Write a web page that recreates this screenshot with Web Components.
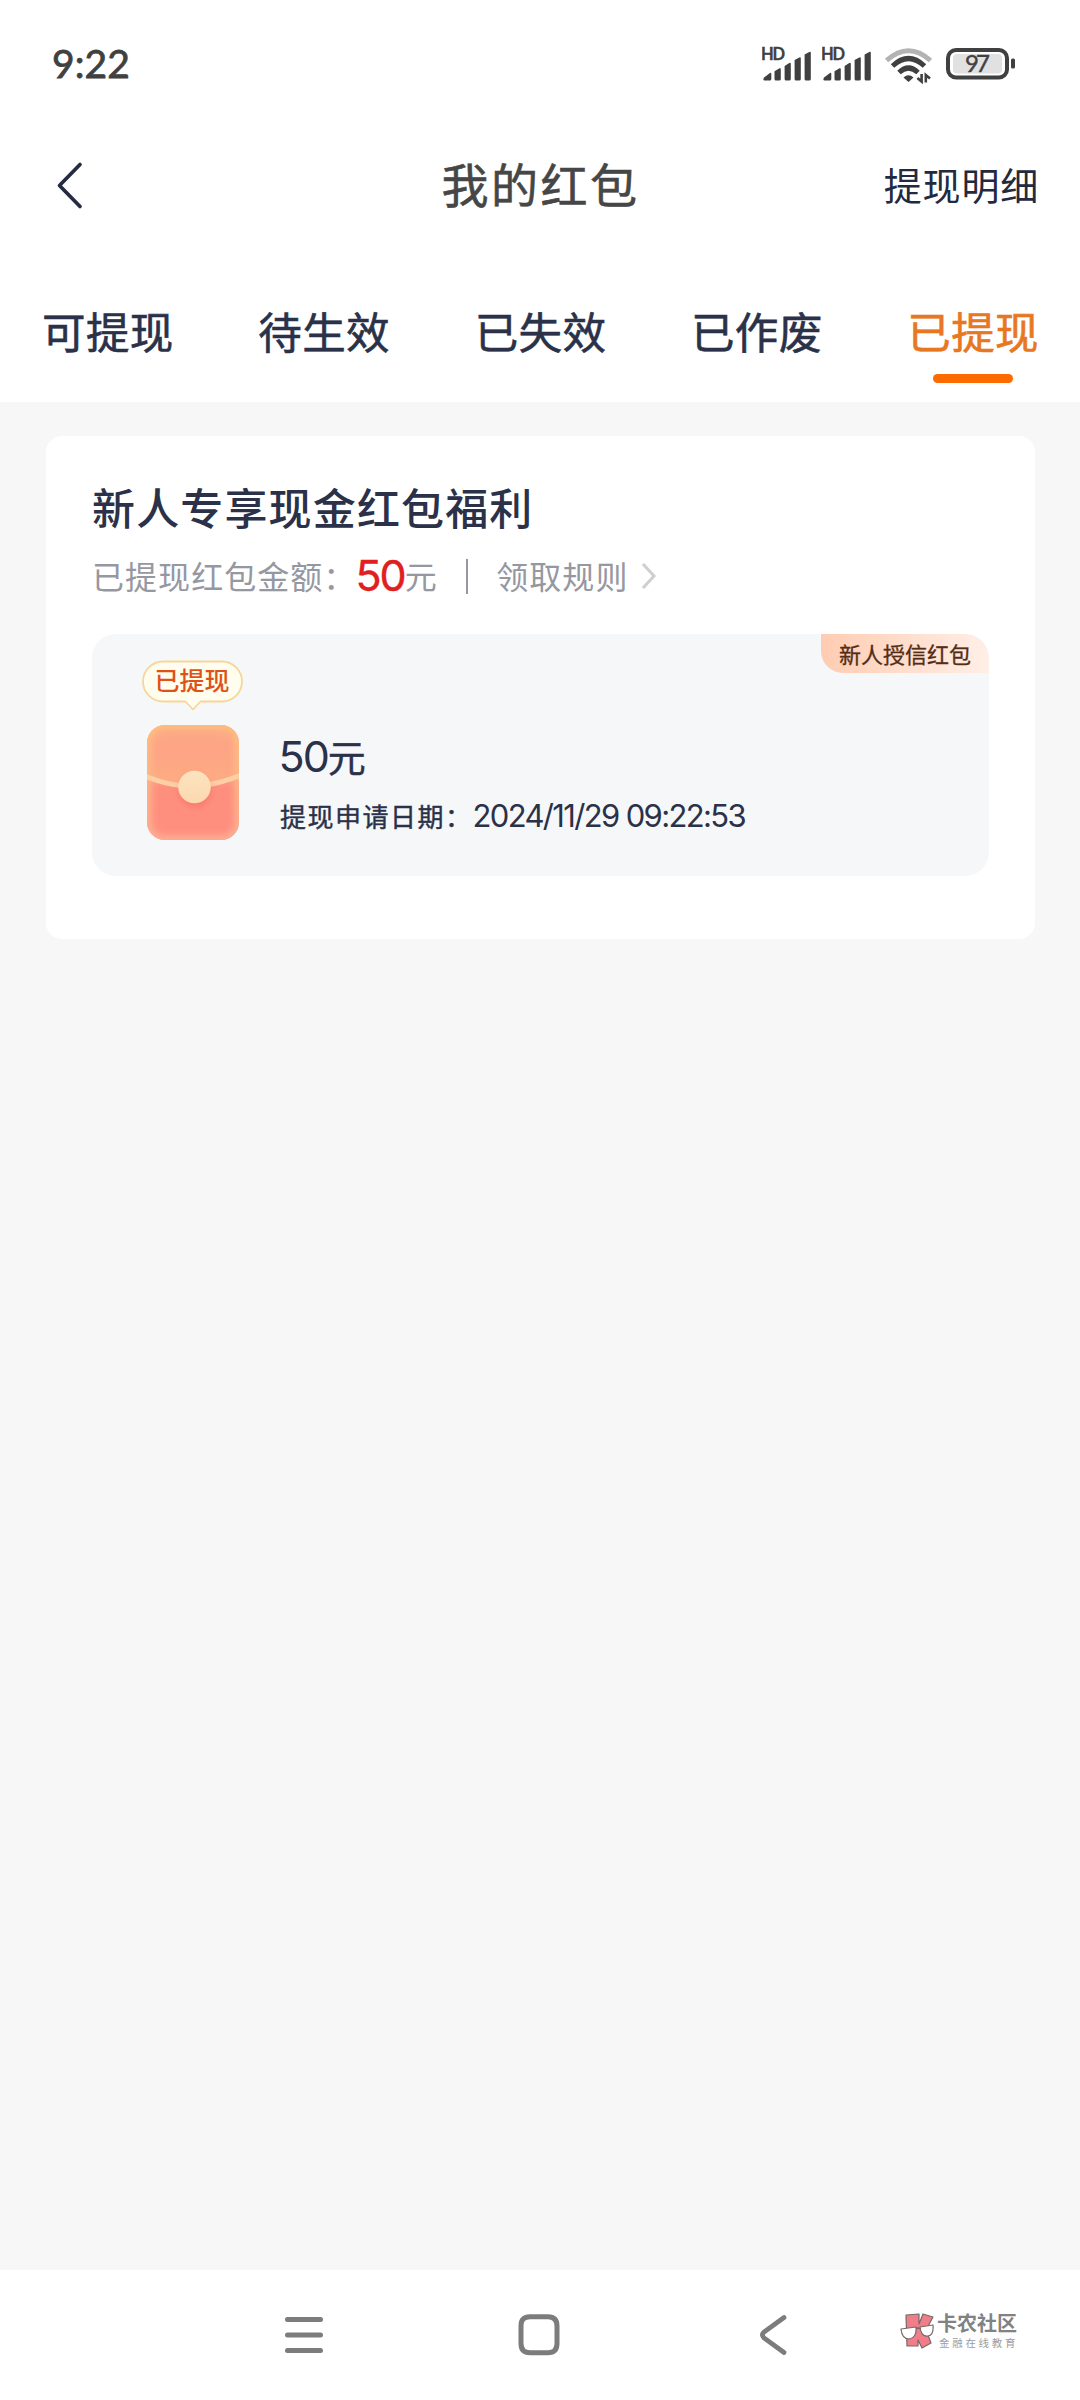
<!DOCTYPE html>
<html lang="zh-CN">
<head>
<meta charset="utf-8">
<title>我的红包</title>
<style>
html,body{margin:0;padding:0}
body{width:1080px;height:2400px;background:#f7f7f7;font-family:"Noto Sans CJK SC",sans-serif;color:#2a3148;overflow:hidden}
</style>
</head>
<body>
<packet-page></packet-page>
<script>
const define = (name, html) => {
  const t = document.createElement('template');
  t.innerHTML = html;
  customElements.define(name, class extends HTMLElement {
    constructor() {
      super();
      this.attachShadow({ mode: 'open' }).append(t.content.cloneNode(true));
    }
  });
};

define('signal-bars', `
<style>:host{display:block;width:60px;height:40px}svg{display:block}</style>
<svg width="60" height="40" viewBox="0 0 60 40" fill="#404040">
  <text x="-1" y="17" font-family="Lato,sans-serif" font-weight="700" font-size="16.5" textLength="24" stroke="#404040" stroke-width=".3">HD</text>
  <path d="M2 34.500l6-4.500q1.300-.6 1.300 1V36q0 1.500-1.500 1.500H2.500Q0.500 37 2 34.500ZM12.500 28.300l5-3q1.300-.6 1.300 1V36q0 1.500-1.500 1.500h-3.300q-1.500 0-1.500-1.500ZM22.600 23l4.700-3q1.500-.6 1.500 1v15q0 1.500-1.500 1.500h-3.200q-1.500 0-1.500-1.500ZM32.600 17l4.700-2.500q1.500-.6 1.500 1V36q0 1.500-1.500 1.500h-3.200q-1.500 0-1.500-1.500ZM42.600 11.500l4.700-2.500q1.500-.6 1.500 1v26q0 1.500-1.500 1.500h-3.200q-1.500 0-1.500-1.500Z"/>
</svg>`);

define('wifi-icon', `
<style>:host{display:block;width:50px;height:40px}svg{display:block}</style>
<svg width="50" height="40" viewBox="0 0 50 40" fill="none" stroke-width="5">
  <path d="M1.500 16.500Q23.500 -3 45.500 16.500" stroke="#b3b3b3"/>
  <path d="M7.500 22Q23.500 7 39.500 22M14 28.500Q23.500 19.500 33 28.500" stroke="#404040"/>
  <path d="M18.500 33.500Q23.500 29 28.500 33.500L23.500 38Z" fill="#404040"/>
  <path d="M36.600 30v7.500l-4.200-3.600M40.800 38.500v-7.500l4.200 3.400" stroke="#404040" stroke-width="2.600"/>
</svg>`);

define('battery-icon', `
<style>:host{display:block;width:70px;height:34px}svg{display:block}</style>
<svg width="70" height="34" viewBox="0 0 70 34">
  <rect x="2" y="2" width="59" height="27.500" rx="8" fill="#fff" stroke="#404040" stroke-width="4"/>
  <rect x="7" y="6" width="49" height="19.500" rx="4" fill="#e1e1e1"/>
  <rect x="65" y="10.500" width="4" height="10" rx="1.500" fill="#404040"/>
  <text x="19" y="24.300" font-family="Lato,sans-serif" font-size="24" fill="#404040" stroke="#404040" stroke-width=".4" textLength="25">97</text>
</svg>`);

define('status-bar', `
<style>
:host{display:flex;align-items:flex-start;justify-content:space-between;height:128px;padding:0 64px 0 52px;box-sizing:border-box;color:#404040}
time{font:400 39px/48px Lato,sans-serif;letter-spacing:.1px;padding-top:39px;-webkit-text-stroke:.8px #404040}
.icons{display:flex;align-items:flex-start;padding-top:43px}
wifi-icon{margin:1px 11px 0 3px}
battery-icon{margin-top:5px}
</style>
<time>9:22</time>
<div class="icons"><signal-bars></signal-bars><signal-bars></signal-bars><wifi-icon></wifi-icon><battery-icon></battery-icon></div>`);

define('title-bar', `
<style>
:host{display:grid;grid-template-columns:1fr auto 1fr;align-items:center;height:110px;padding:0 41px 6px 42px}
svg{display:block;margin:4px 0 0 14px}
h1{margin:0;font-size:47px;font-weight:400;letter-spacing:2.500px;color:#464646;line-height:70px;-webkit-text-stroke:.6px #464646}
.more{justify-self:end;font-size:38px;letter-spacing:.8px;line-height:56px;padding-top:2px;color:#232a40}
</style>
<svg width="28" height="50" viewBox="0 0 28 50" fill="none" stroke="#252c42" stroke-width="3.700" stroke-linecap="round" stroke-linejoin="round"><path d="M24 4.500L3.500 25.500L24 46.500"/></svg>
<h1><slot name="title"></slot></h1>
<span class="more"><slot name="action"></slot></span>`);

define('tab-item', `
<style>
:host{display:flex;flex-direction:column;align-items:center;font-size:43.500px;font-weight:400;line-height:64px;letter-spacing:.4px;-webkit-text-stroke:.6px currentColor}
i{display:none;width:80px;height:9px;border-radius:5px;background:#fd6a00;margin-top:11px}
:host([active]){color:#e87722}
:host([active]) i{display:block}
</style>
<slot></slot><i></i>`);

define('tab-bar', `
<style>:host{display:flex;justify-content:space-between;align-items:flex-start;height:158px;padding:55px 41px 0 42px;box-sizing:border-box}</style>
<slot></slot>`);

define('envelope-icon', `
<style>:host{display:block;width:92px;height:115px;margin-left:1px}svg{display:block}</style>
<svg width="92" height="115" viewBox="0 0 92 115">
  <defs>
    <linearGradient id="b" x1="0" y1="0" x2="0" y2="1"><stop offset="0" stop-color="#fda987"/><stop offset=".45" stop-color="#fda083"/><stop offset=".55" stop-color="#fe8f7e"/><stop offset="1" stop-color="#fe8f80"/></linearGradient>
    <linearGradient id="e" x1="0" y1="0" x2="0" y2="1"><stop offset="0" stop-color="#fdbf7e"/><stop offset="1" stop-color="#fdae94"/></linearGradient>
    <linearGradient id="c" x1="0" y1="0" x2="0" y2="1"><stop offset="0" stop-color="#fce3be"/><stop offset="1" stop-color="#fbd9b0"/></linearGradient>
    <linearGradient id="f" x1="0" y1="0" x2="0" y2="1"><stop offset=".4" stop-color="#fdb083" stop-opacity="0"/><stop offset="1" stop-color="#fdb585" stop-opacity=".7"/></linearGradient>
    <clipPath id="k"><rect width="92" height="115" rx="18"/></clipPath>
    <filter id="s" x="-20%" y="-20%" width="140%" height="140%"><feGaussianBlur stdDeviation="3"/></filter>
  </defs>
  <g clip-path="url(#k)">
    <rect width="92" height="115" fill="url(#b)"/>
    <path d="M0 0H92V49Q70 59 47 59Q20 59 0 50Z" fill="url(#f)"/>
    <rect width="92" height="115" rx="18" fill="none" stroke="url(#e)" stroke-width="9" filter="url(#s)"/>
    <path d="M-1 51.500Q18 59 33 60.500M62 59.500Q77 57 93 50.500" fill="none" stroke="#fccfa5" stroke-width="5"/>
    <circle cx="48" cy="66" r="16" fill="#f4665a" opacity=".5" filter="url(#s)"/>
    <circle cx="47.500" cy="62" r="16.300" fill="url(#c)"/>
  </g>
</svg>`);

define('speech-tag', `
<style>
:host{display:grid;width:102px;height:52px;margin-left:1px}
svg,span{grid-area:1/1}
span{font-size:25px;font-weight:500;line-height:38px;text-align:center;color:#df5217;z-index:1;padding-right:2px}
</style>
<svg width="102" height="52" viewBox="0 0 102 52"><path d="M21 1.500H80A20 20 0 0 1 80 41.500H58.500L51 49.500L43.500 41.500H21A20 20 0 0 1 21 1.500Z" fill="#fffdee" stroke="#f7d69b" stroke-width="1.800" stroke-linejoin="round"/></svg>
<span><slot></slot></span>`);

define('reward-item', `
<style>
:host{display:flex;position:relative;height:242px;background:#f5f7f9;border-radius:24px;overflow:hidden;box-sizing:border-box;padding-left:49px}
.left{display:flex;flex-direction:column;align-items:center;padding-top:26px;gap:13px}
.info{padding:95px 0 0 36px}
.amount{font:400 43px/54px Inter,"Noto Sans CJK SC",sans-serif;letter-spacing:-2px;display:flex;align-items:baseline;margin-left:-1.500px}
.amount b{font:400 38px/54px "Noto Sans CJK SC",sans-serif;letter-spacing:0;-webkit-text-stroke:.4px}
.date{display:flex;align-items:baseline;margin-top:13px;font-size:26px;line-height:40px;letter-spacing:1.500px;-webkit-text-stroke:.4px}
.date time{font:400 31px/40px Inter,sans-serif;letter-spacing:-1.650px;-webkit-text-stroke:0}
.ribbon{position:absolute;right:0;top:0;width:168px;height:39px;border-radius:0 24px 0 22px;background:linear-gradient(90deg,#ffccb2,#ffefe7);color:#542d15;font-size:22px;line-height:38px;text-align:center;-webkit-text-stroke:.3px}
</style>
<div class="left"><speech-tag><slot name="state"></slot></speech-tag><envelope-icon></envelope-icon></div>
<div class="info">
  <div class="amount"><slot name="amount"></slot><b>元</b></div>
  <div class="date"><span>提现申请日期：</span><time><slot name="date"></slot></time></div>
</div>
<div class="ribbon"><slot name="ribbon"></slot></div>`);

define('welfare-card', `
<style>
:host{display:block;margin:34px 45px 0 46px;height:503px;background:#fff;border-radius:16px;box-sizing:border-box;padding:38px 46px 0}
h2{margin:0;font-size:43px;font-weight:500;letter-spacing:1.150px;line-height:64px;white-space:nowrap}
.sub{display:flex;align-items:center;height:62px;margin:6px 0 28px;font-size:32px;letter-spacing:1.050px;color:#9598a1;white-space:nowrap}
.sum{font:400 43px/62px Inter,sans-serif;letter-spacing:-2px;color:#e02020;-webkit-text-stroke:.4px;margin-left:-1px}
.rule{width:2.500px;height:35px;background:#9598a1;margin:2px 28px 0}
svg{margin:2px 0 0 13px}
</style>
<h2><slot name="title"></slot></h2>
<div class="sub"><span>已提现红包金额：</span><span class="sum"><slot name="sum"></slot></span><span>元</span><i class="rule"></i><span>领取规则</span>
<svg width="16" height="30" viewBox="0 0 16 30" fill="none" stroke="#cfcfcf" stroke-width="3"><path d="M2 3L13 15L2 27"/></svg></div>
<slot></slot>`);

define('brand-mark', `
<style>
:host{display:flex;gap:3px;color:#828282}
.t{display:flex;flex-direction:column;white-space:nowrap}
b{font-size:20px;line-height:22px;font-weight:700}
small{font-size:10.500px;line-height:12px;letter-spacing:2.700px;color:#9d9d9d;padding-left:2px;margin-top:3px}
svg{margin-top:1px}
</style>
<svg width="34" height="38" viewBox="0 0 34 38" stroke="#79686b" stroke-width="1.200" stroke-linejoin="round">
  <path d="M6 2L19 1V11L23 1L33 4L26 17L31 30L22 35L18 27V33L7 33Z" fill="#f07e88"/>
  <path d="M1 16L16 14Q17 25 9 26Q2 26 1 16ZM20 14L33 12Q34 22 28 23Q21 24 20 14Z" fill="#fff"/><path d="M16 16Q18 14 20 16" fill="none"/>
</svg>
<div class="t"><b>卡农社区</b><small>金融在线教育</small></div>`);

define('nav-bar', `
<style>
:host{display:flex;align-items:flex-start;height:130px;background:#fff;box-sizing:border-box;padding:42px 0 0 283px}
.home{margin-left:192px}.back{margin-left:195px}brand-mark{margin:0 0 0 110px}
svg{display:block}
</style>
<svg width="42" height="46" viewBox="0 0 42 46" stroke="#7c7c7c" stroke-width="5" stroke-linecap="round"><path d="M4.500 7.500H37.500M4.500 23H37.500M4.500 38.500H37.500"/></svg>
<svg class="home" width="44" height="46" viewBox="0 0 44 46" fill="none" stroke="#7c7c7c" stroke-width="5"><path d="M13 4.800H31Q40 4.800 40 14V31.500Q40 40.700 31 40.700H13Q4 40.700 4 31.500V14Q4 4.800 13 4.800Z"/></svg>
<svg class="back" width="34" height="46" viewBox="0 0 34 46" fill="none" stroke="#7c7c7c" stroke-width="4.700" stroke-linecap="round"><path d="M28 5.500L8 20Q5 23 8 26L28 40.500"/></svg>
<brand-mark></brand-mark>`);

define('packet-page', `
<style>
:host{display:flex;flex-direction:column;height:2400px}
header{background:#fff}
main{flex:1}
</style>
<header>
  <status-bar></status-bar>
  <title-bar><span slot="title">我的红包</span><span slot="action">提现明细</span></title-bar>
  <tab-bar><tab-item>可提现</tab-item><tab-item>待生效</tab-item><tab-item>已失效</tab-item><tab-item>已作废</tab-item><tab-item active>已提现</tab-item></tab-bar>
</header>
<main>
  <welfare-card>
    <span slot="title">新人专享现金红包福利</span><span slot="sum">50</span>
    <reward-item><span slot="state">已提现</span><span slot="amount">50</span><span slot="date">2024/11/29 09:22:53</span><span slot="ribbon">新人授信红包</span></reward-item>
  </welfare-card>
</main>
<nav-bar></nav-bar>`);
</script>
</body>
</html>
